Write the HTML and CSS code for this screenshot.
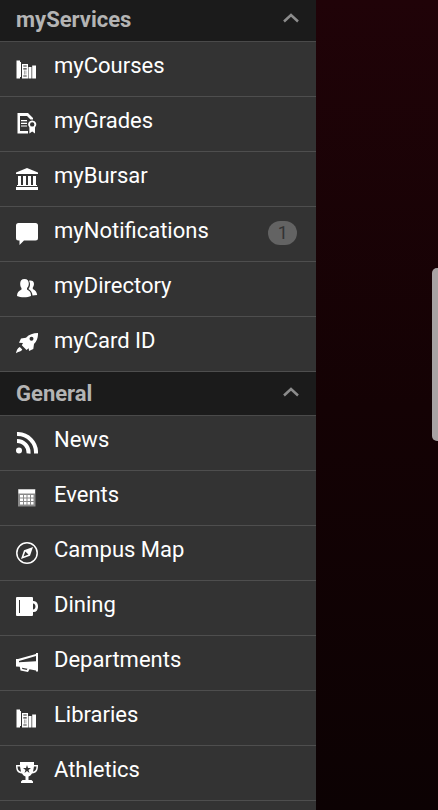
FILE: index.html
```html
<!DOCTYPE html>
<html lang="en">
<head>
<meta charset="utf-8">
<meta name="viewport" content="width=device-width, initial-scale=1">
<title>Menu</title>
<link rel="stylesheet" href="styles.css">
</head>
<body>
<svg class="sprite" aria-hidden="true">
  <symbol id="books" viewBox="0 0 22 22">
    <path d="M.5 2.500h3.500v1.500h1V19H4v1.500H.5zM6 6h6v14.500H6zM12.500 9h3v11.500h-3zM16.200 7.500H20v13h-3.800z"/>
    <path class="cut" d="M7.300 7.600h3.400v.8H7.300zM7.300 10.300h3.400v1.200H7.300zM7.300 17.600h3.400v1H7.300z"/>
    <path class="shade" d="M8 12.500h.7v4H8zM9.600 12.500h.7v4h-.7z"/>
  </symbol>
</svg>
<nav class="drawer" aria-label="Main">
  <section>
    <h2><button class="heading" type="button" aria-expanded="true">myServices
      <svg class="chevron" viewBox="0 0 18 10" aria-hidden="true"><path d="M2 8.500l7-6.500 7 6.500"/></svg></button></h2>
    <ul>
      <li><a href="#courses"><svg class="icon" aria-hidden="true"><use href="#books"/></svg><span>myCourses</span></a></li>
      <li><a href="#grades"><svg class="icon" viewBox="0 0 22 22" aria-hidden="true">
        <path d="M1.500 0H12l5 5v1.500h-2.500L11 3H4v15h8v2.500H1.500zM5 7h6v1.200H5zM5 9.700h6v1.200H5zM5 12.400h6v1.200H5z"/>
        <path fill-rule="evenodd" d="M16.200 7.500a4 4 0 0 1 2.800 7V20.500l-2.800-2-2.800 2v-6A4 4 0 0 1 16.200 7.500zM16.200 9.200a2.200 2.200 0 1 0 0 4.400 2.200 2.200 0 0 0 0-4.400z"/></svg><span>myGrades</span></a></li>
      <li><a href="#bursar"><svg class="icon" viewBox="0 0 22 22" aria-hidden="true">
        <path d="M11 0l11 4.500V6H0V4.500zM2 8h3v9H2zM7 8h3v9H7zM12 8h3v9h-3zM17 8h3v9h-3zM1 17h20v1H1zM0 19h22v3H0z"/></svg><span>myBursar</span></a></li>
      <li><a href="#notifications"><svg class="icon" viewBox="0 0 22 22" aria-hidden="true">
        <path d="M2.500 0h17A2.500 2.500 0 0 1 22 2.500v12.500a2.500 2.500 0 0 1-2.500 2.500H8L3.500 22v-4.500h-1A2.500 2.500 0 0 1 0 15V2.500A2.500 2.500 0 0 1 2.500 0z"/></svg><span>myNotifications</span><span class="badge">1</span></a></li>
      <li><a href="#directory"><svg class="icon" viewBox="0 0 22 22" aria-hidden="true">
        <path d="M8.500 1c3 0 4.300 2 4.300 4.500 0 2-.8 3.500-1.800 4.500v1.500c3 1.500 4 3 4 6.500-3.500 1.700-10.500 1.700-14 0 0-3.500 1.500-5 4.500-6.500V10C4.600 9 4.200 7.500 4.200 5.500 4.200 3 5.500 1 8.500 1z"/>
        <path d="M13 2.700c4.500-1.200 6.500 3 3.800 6.800v1.500c2.500 1.300 4 3 4.400 6l-4.700.5c-.2-3-1.500-5-4-6.500 1.800-2.500 2.200-5.500.5-8.300z"/></svg><span>myDirectory</span></a></li>
      <li><a href="#card"><svg class="icon" viewBox="0 0 22 22" aria-hidden="true">
        <path fill-rule="evenodd" d="M22 0c.2 4-1 8-4 11l-.7 5-4.300 2-.3-2.700-2.200 1.700-4.700-4.700 1.200-2.300-4-.3L5 5.500l5-.8C13 1.500 17 0 22 0zM15.500 3.800a2 2 0 1 0 0 4 2 2 0 0 0 0-4z"/>
        <path d="M3.800 14l2.500 2.600c-1 2-3.300 1.900-6.300 3.600.5-2.800 1.500-5 3.800-6.200z"/></svg><span>myCard ID</span></a></li>
    </ul>
  </section>
  <section>
    <h2><button class="heading" type="button" aria-expanded="true">General
      <svg class="chevron" viewBox="0 0 18 10" aria-hidden="true"><path d="M2 8.500l7-6.500 7 6.500"/></svg></button></h2>
    <ul>
      <li><a href="#news"><svg class="icon" viewBox="0 0 22 22" aria-hidden="true">
        <circle cx="3" cy="18.500" r="3"/><path class="wave" d="M1 9a11.500 11.500 0 0 1 11.500 12.500M1 2a18.500 18.500 0 0 1 19 19.500"/></svg><span>News</span></a></li>
      <li><a href="#events"><svg class="icon" viewBox="0 0 22 22" aria-hidden="true">
        <path class="shade" d="M2 2h17.500v17.500H2z"/><path d="M2.500 2.500h16.500v4H2.500zM4 8h3v2.500H4zM8 8h2.500v2.500H8zM11.500 8H14v2.500h-2.500zM15 8h2.500v2.500H15zM4 11.500h3V14H4zM8 11.500h2.500V14H8zM11.500 11.500H14V14h-2.500zM15 11.500h2.500V14H15zM4 15h3v2.500H4zM8 15h2.500v2.500H8zM11.500 15H14v2.500h-2.500zM15 15h2.500v2.500H15z"/></svg><span>Events</span></a></li>
      <li><a href="#map"><svg class="icon" viewBox="0 0 22 22" aria-hidden="true">
        <circle class="line" cx="11" cy="11" r="10.200"/><path fill-rule="evenodd" d="M17 5l-3 8.800L5 17l3-8.800zM9.300 9.500L7.500 14.500l5-2z"/></svg><span>Campus Map</span></a></li>
      <li><a href="#dining"><svg class="icon" viewBox="0 0 22 22" aria-hidden="true">
        <path fill-rule="evenodd" d="M1 0h15a1 1 0 0 1 1 1v3c6.700-1 6.700 12 0 11v3a1 1 0 0 1-1 1H1a1 1 0 0 1-1-1V1a1 1 0 0 1 1-1zM3 3v13h1V3zM17 6.500v6c3.300 0 3.300-6 0-6z"/></svg><span>Dining</span></a></li>
      <li><a href="#departments"><svg class="icon" viewBox="0 0 22 22" aria-hidden="true">
        <path fill-rule="evenodd" d="M0 7h2l18-5V1h2v18.500h-2v-1l-6.500-1.300-1.500 2.800-7.500-1.500-.7-3.700L0 14.500zM3 9v1.300l17-1V4zM6 15.700l.3 1.300 4.500 1 .6-1.300z"/></svg><span>Departments</span></a></li>
      <li><a href="#libraries"><svg class="icon" aria-hidden="true"><use href="#books"/></svg><span>Libraries</span></a></li>
      <li><a href="#athletics"><svg class="icon" viewBox="0 0 22 22" aria-hidden="true">
        <path fill-rule="evenodd" d="M4 0h14v3h4c0 6-1.500 8-6 8.500-1 1.500-2 2.500-3.500 3V18h3l1.500 1.500V21H5v-1.500L6.500 18h3v-3.500C8 14 7 13 6 11.500 1.500 11 0 9 0 3h4zM1.500 4.500c.2 3 1 4.700 3.500 5.200L4 4.500zM20.500 4.500H18l-1 5.200c2.500-.5 3.300-2.200 3.500-5.200zM11 3l-1 3H7l2.500 2-1 3L11 9l2.500 2-1-3L15 6h-3z"/></svg><span>Athletics</span></a></li>
    </ul>
  </section>
</nav>
<div class="edge-handle"></div>
</body>
</html>
```
FILE: styles.css
```css
* {
  box-sizing: border-box;
}

body {
  margin: 0;
  min-height: 100vh;
  overflow: hidden;
  background: linear-gradient(#200308, #140204 50%, #0c0203);
  font-family: Roboto, "Liberation Sans", sans-serif;
  font-size: 22px;
  line-height: 28px;
}

.sprite {
  position: absolute;
  width: 0;
  height: 0;
}

.drawer {
  width: 72.2%;
  min-height: 100vh;
  background: #333;
  color: #fff;
}

.drawer section:first-child {
  margin-top: -2px;
}

.drawer::before {
  content: "";
  display: table;
}

h2,
ul {
  margin: 0;
  padding: 0;
  font-size: inherit;
  list-style: none;
}

.heading {
  display: flex;
  align-items: center;
  justify-content: space-between;
  width: 100%;
  height: 44px;
  padding: 0 16px;
  border: 0;
  border-bottom: 1px solid #4a4a4a;
  background: #1b1b1b;
  color: #b4b4b4;
  font: inherit;
  font-weight: 700;
}

.chevron {
  width: 18px;
  height: 10px;
  margin-bottom: 3px;
  fill: none;
  stroke: #8c8c8c;
  stroke-width: 2.5;
}

li a {
  display: flex;
  align-items: flex-start;
  gap: 16px;
  height: 55px;
  padding: 10px 19px 0 16px;
  border-bottom: 1px solid #4e4e4e;
  color: inherit;
  text-decoration: none;
}

.icon {
  width: 22px;
  height: 22px;
  margin-top: 6px;
  fill: #fff;
}

.cut {
  fill: #333;
}

.shade {
  fill: #8a8a8a;
}

.wave {
  fill: none;
  stroke: #fff;
  stroke-width: 4;
}

.line {
  fill: none;
  stroke: #fff;
  stroke-width: 1.5;
}

.badge {
  width: 29px;
  height: 24px;
  margin: 4px 0 0 auto;
  border-radius: 12px;
  background: #636363;
  color: #333;
  font-size: 18px;
  line-height: 24px;
  text-align: center;
}

.edge-handle {
  position: absolute;
  top: 268px;
  right: 0;
  width: 6px;
  height: 173px;
  border-radius: 5px 0 0 5px;
  background: #a8a3a4;
}
```
